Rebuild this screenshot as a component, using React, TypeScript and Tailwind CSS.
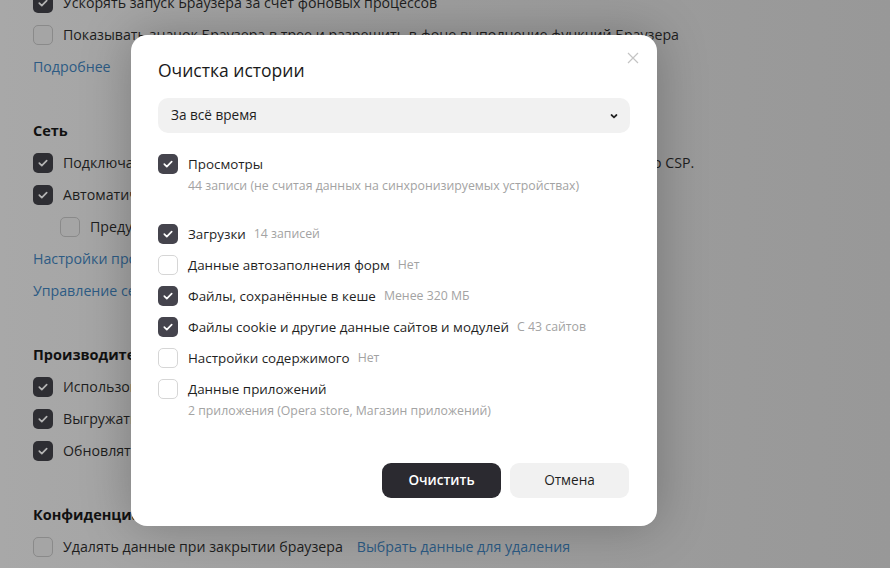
import React from 'react';

const font = { fontFamily: '"Open Sans", "Noto Sans", sans-serif' };

function Check({ on, dim }: { on: boolean; dim?: boolean }) {
  if (!on)
    return (
      <span
        className={`shrink-0 w-5 h-5 rounded-[5px] border ${dim ? 'border-[#8a8a8a] bg-[#a5a5a5]' : 'border-[#d6d6d6] bg-white'}`}
      />
    );
  return (
    <span
      className={`shrink-0 w-5 h-5 rounded-[5px] flex items-center justify-center ${dim ? 'bg-[#2e2e33]' : 'bg-[#45444d]'}`}
    >
      <svg width="12" height="12" viewBox="0 0 12 12" fill="none">
        <path
          d="M2.3 6.2l2.5 2.4 4.9-5"
          stroke={dim ? '#b4b4b4' : '#fff'}
          strokeWidth="1.7"
          strokeLinecap="round"
          strokeLinejoin="round"
        />
      </svg>
    </span>
  );
}

function BgRow({ on, text, indent }: { on: boolean; text: React.ReactNode; indent?: boolean }) {
  return (
    <div className={`h-8 flex items-center gap-[10px] whitespace-nowrap ${indent ? 'pl-[27px]' : ''}`}>
      <Check on={on} dim />
      <span>{text}</span>
    </div>
  );
}

function BgLink({ children }: { children: React.ReactNode }) {
  return <div className="h-8 flex items-center text-[#2d5b84] whitespace-nowrap">{children}</div>;
}

function BgHead({ children }: { children: React.ReactNode }) {
  return <div className="h-8 flex items-center font-bold text-[14.5px] text-[#111]">{children}</div>;
}

const Gap = () => <div className="h-8" />;

type Item = { on: boolean; label: string; note?: string; sub?: string };

const items: Item[] = [
  { on: true, label: 'Загрузки', note: '14 записей' },
  { on: false, label: 'Данные автозаполнения форм', note: 'Нет' },
  { on: true, label: 'Файлы, сохранённые в кеше', note: 'Менее 320 МБ' },
  { on: true, label: 'Файлы cookie и другие данные сайтов и модулей', note: 'С 43 сайтов' },
  { on: false, label: 'Настройки содержимого', note: 'Нет' },
  { on: false, label: 'Данные приложений', sub: '2 приложения (Opera store, Магазин приложений)' },
];

function ModalRow({ item }: { item: Item }) {
  return (
    <div>
      <div className="h-5 flex items-center gap-[10px] whitespace-nowrap">
        <Check on={item.on} />
        <span className="text-[13.4px] text-[#1f1f1f]">{item.label}</span>
        {item.note && <span className="text-[12.3px] text-[#a3a3a3] -ml-[2px]">{item.note}</span>}
      </div>
      {item.sub && (
        <div className="pl-[30px] mt-[3px] text-[12.3px] leading-[18px] text-[#a3a3a3] whitespace-nowrap">{item.sub}</div>
      )}
    </div>
  );
}

export default function App() {
  return (
    <div
      className="relative w-full h-[568px] overflow-hidden bg-gradient-to-r from-[#a8a8a8] via-[#9e9e9e] to-[#989898] text-[14.2px] text-[#1e1e1e]"
      style={font}
    >
      <div className="pl-[33px] -mt-[13px]">
        <BgRow on text="Ускорять запуск Браузера за счет фоновых процессов" />
        <BgRow on={false} text="Показывать значок Браузера в трее и разрешить в фоне выполнение функций Браузера" />
        <BgLink>Подробнее</BgLink>
        <Gap />
        <BgHead>Сеть</BgHead>
        <BgRow on text="Подключаться к сайтам, использующим шифрование по ГОСТу. Требуется КриптоПро CSP." />
        <BgRow on text="Автоматически определять настройки прокси-сервера" />
        <BgRow on={false} indent text="Предупреждать при вводе номера карты на небезопасных сайтах" />
        <BgLink>Настройки прокси-сервера</BgLink>
        <BgLink>Управление сертификатами</BgLink>
        <Gap />
        <BgHead>Производительность</BgHead>
        <BgRow on text="Использовать аппаратное ускорение, если возможно" />
        <BgRow on text="Выгружать из памяти неиспользуемые вкладки" />
        <BgRow on text="Обновлять браузер, даже если он не запущен" />
        <Gap />
        <BgHead>Конфиденциальность</BgHead>
        <BgRow
          on={false}
          text={
            <>
              Удалять данные при закрытии браузера
              <span className="ml-[14px] text-[#2d5b84]">Выбрать данные для удаления</span>
            </>
          }
        />
      </div>

      <div className="absolute left-[131px] top-[35px] w-[526px] h-[491px] bg-white rounded-[16px] shadow-[0_0_50px_rgba(0,0,0,0.25)] px-[27px] pt-[57px]">
        <div className="absolute right-[18px] top-[17px]">
          <svg width="12" height="12" viewBox="0 0 12 12">
            <path d="M1 1l10 10M11 1L1 11" stroke="#c4c4c4" strokeWidth="1.2" />
          </svg>
        </div>
        <div className="-mt-[35px] h-[26px] flex items-center text-[17.5px] text-[#1a1a1a]">Очистка истории</div>
        <div className="mt-[15px] h-[35px] rounded-[10px] bg-[#f1f1f1] flex items-center justify-between pl-[13px] pr-[11px]">
          <span className="text-[13.6px] text-[#1f1f1f]">За всё время</span>
          <svg width="10" height="8" viewBox="0 0 10 8">
            <path d="M2.5 3l2.5 2.3L7.5 3" stroke="#222" strokeWidth="1.7" fill="none" strokeLinecap="round" />
          </svg>
        </div>
        <div className="mt-[21px]">
          <ModalRow item={{ on: true, label: 'Просмотры', sub: '44 записи (не считая данных на синхронизируемых устройствах)' }} />
        </div>
        <div className="mt-[29px] flex flex-col gap-[11px]">
          {items.map((it) => (
            <ModalRow key={it.label} item={it} />
          ))}
        </div>
        <div className="absolute right-[28px] bottom-[28px] flex gap-[9px]">
          <button className="w-[119px] h-[35px] rounded-[9px] bg-[#2b2a30] text-white text-[13.5px] font-semibold">
            Очистить
          </button>
          <button className="w-[119px] h-[35px] rounded-[9px] bg-[#f1f1f1] text-[#1f1f1f] text-[13.6px]">Отмена</button>
        </div>
      </div>
    </div>
  );
}
